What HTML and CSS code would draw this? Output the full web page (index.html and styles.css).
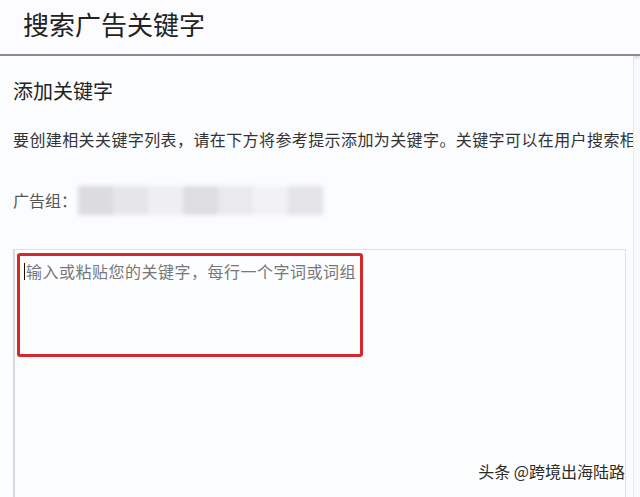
FILE: index.html
```html
<!DOCTYPE html>
<html lang="zh-CN">
<head>
    <meta charset="UTF-8">
    <meta name="viewport" content="width=device-width, initial-scale=1.0">
    <title>搜索广告关键字</title>
    <link rel="stylesheet" href="styles.css">
</head>
<body>
    <div class="header">搜索广告关键字</div>

    <div class="main">
        <h3>添加关键字</h3>
        <p class="intro">要创建相关关键字列表，请在下方将参考提示添加为关键字。关键字可以在用户搜索相关字词时触发广告。</p>

        <div class="group-row">
            <span class="label">广告组：</span>
            <div class="blurred">
                <span class="b1"></span>
                <span class="b2"></span>
                <span class="b3"></span>
                <span class="b4"></span>
                <span class="b5"></span>
                <span class="b6"></span>
                <span class="b7"></span>
            </div>
        </div>

        <div class="editor">
            <div class="highlight">
                <span class="caret"></span><span class="placeholder">输入或粘贴您的关键字，每行一个字词或词组</span>
            </div>
        </div>
    </div>

    <div class="watermark">头条 @跨境出海陆路</div>
</body>
</html>
```

FILE: styles.css
```css
body {
    margin: 0;
    height: 497px;
    overflow: hidden;
    background-color: #f9fafc;
    font-family: "Noto Sans CJK SC", "Noto Sans", sans-serif;
    color: #333;
    position: relative;
}
.header {
    height: 54px;
    line-height: 48px;
    padding-left: 23px;
    font-size: 26px;
    color: #222;
    background-color: #fcfcfe;
    border-bottom: 2px solid #8c8c8e;
    box-shadow: 0 2px 3px rgba(0, 0, 0, 0.12);
}
.main {
    margin-right: 6px;
    padding: 0 7px 0 13px;
    border-right: 1px solid #e6e7ea;
    background-color: #fbfcfe;
    height: 441px;
    overflow: hidden;
}
h3 {
    margin: 20px 0 0;
    font-size: 20px;
    font-weight: normal;
    line-height: 30px;
    color: #222;
}
.intro {
    margin: 21px 0 0;
    font-size: 16px;
    letter-spacing: 0.4px;
    line-height: 24px;
    white-space: nowrap;
    color: #333;
}
.group-row {
    display: flex;
    align-items: center;
    margin-top: 34px;
    height: 30px;
}
.label {
    font-size: 16px;
    color: #555;
    width: 65px;
}
.blurred {
    display: flex;
    height: 29px;
    width: 245px;
    filter: blur(2px);
}
.blurred span {
    flex: 1;
}
.b1 { background-color: #dcdcdf; }
.b2 { background-color: #e6e6e9; }
.b3 { background-color: #efeff1; }
.b4 { background-color: #dedee1; }
.b5 { background-color: #eaeaec; }
.b6 { background-color: #f2f2f4; }
.b7 { background-color: #e4e4e7; }
.editor {
    margin-top: 34px;
    height: 260px;
    border: 1px solid #e0e0e4;
    border-left: 2px solid #d8d8dc;
    background-color: #fcfdfe;
    padding: 3px 0 0 2px;
}
.highlight {
    width: 336px;
    height: 95px;
    border: 3px solid #d7282b;
    border-radius: 3px;
    padding: 3px 0 0 4px;
    display: flex;
    align-items: flex-start;
}
.caret {
    width: 1px;
    height: 17px;
    margin-top: 4px;
    background-color: #111;
}
.placeholder {
    font-size: 16px;
    letter-spacing: 0.5px;
    line-height: 24px;
    color: #777;
    margin-left: 1px;
}
.watermark {
    position: absolute;
    right: 15px;
    bottom: 14px;
    font-size: 16px;
    color: #2a2a2a;
    text-shadow: 1px 1px 0 #fff, -1px -1px 0 #fff, 1px -1px 0 #fff, -1px 1px 0 #fff;
}
```
